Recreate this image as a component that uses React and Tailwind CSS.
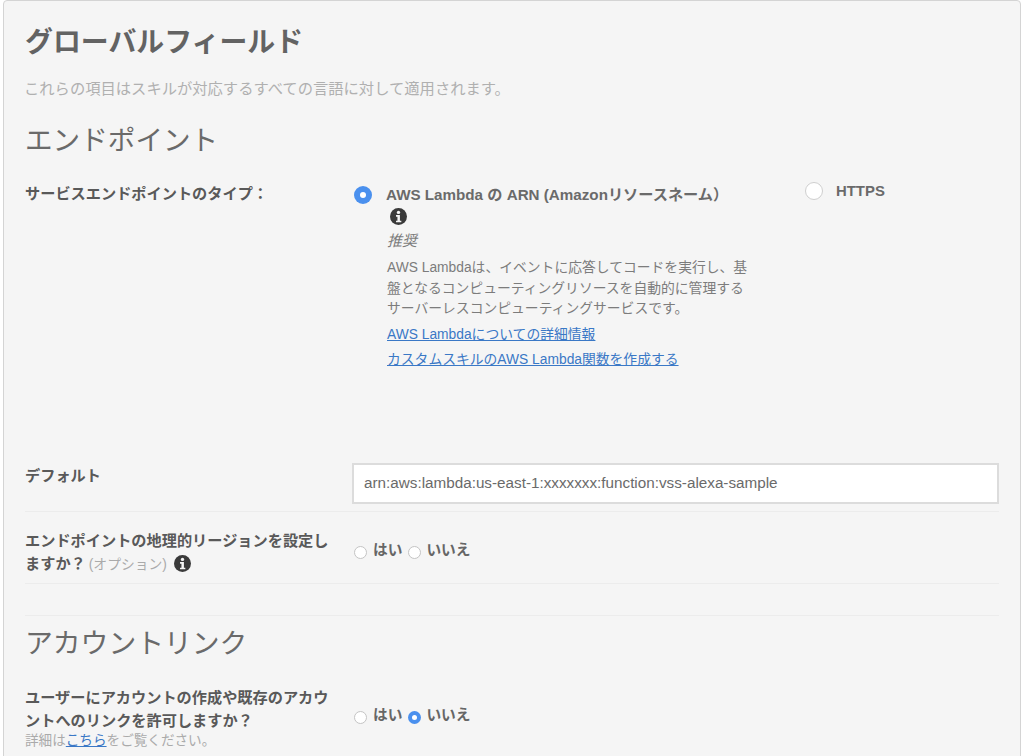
const FONT = "font-['Liberation_Sans','Noto_Sans_CJK_JP',sans-serif]"

function InfoIcon({ className }) {
  return (
    <svg className={className} viewBox="0 0 24 24">
      <circle cx="12" cy="12" r="12" fill="#3a3a3a" />
      <circle cx="12" cy="6.2" r="2.4" fill="#f5f5f5" />
      <path d="M8.5 10h5.5v8h2v2.2H8.5V18h2v-5.8h-2z" fill="#f5f5f5" />
    </svg>
  )
}

function BigRadio({ checked }) {
  if (checked) {
    return (
      <span className="flex h-[18px] w-[18px] shrink-0 items-center justify-center rounded-full bg-[#4a90ee]">
        <span className="h-[6px] w-[6px] rounded-full bg-white" />
      </span>
    )
  }
  return <span className="block h-[18px] w-[18px] shrink-0 rounded-full border border-[#cfcfcf] bg-white" />
}

function SmallRadio({ checked }) {
  if (checked) {
    return (
      <span className="mt-[6px] flex h-[13px] w-[13px] shrink-0 items-center justify-center rounded-full bg-[#4a90ee]">
        <span className="h-[5px] w-[5px] rounded-full bg-white" />
      </span>
    )
  }
  return <span className="mt-[6px] block h-[13px] w-[13px] shrink-0 rounded-full border border-[#c4c4c4] bg-white" />
}

function YesNo({ value }) {
  return (
    <div className="flex text-[14.7px] leading-[20px] font-bold text-[#666]">
      <SmallRadio checked={value === 'yes'} />
      <span className="ml-[6px]">はい</span>
      <span className="ml-[6px]"><SmallRadio checked={value === 'no'} /></span>
      <span className="ml-[5px]">いいえ</span>
    </div>
  )
}

export default function App() {
  return (
    <div className={`${FONT} h-[756px] w-[1024px] overflow-hidden bg-white pl-[3px]`}>
      <div className="h-[790px] w-[1018px] rounded-t border border-[#d4d4d4] bg-[#f5f5f5] pr-[21px] pl-[21px]">
        <h1 className="pt-[22px] text-[27.9px] leading-[40px] font-bold text-[#636363]">グローバルフィールド</h1>
        <p className="mt-[15px] -ml-[1px] text-[15.3px] leading-[22px] text-[#b0b0b0]">
          これらの項目はスキルが対応するすべての言語に対して適用されます。
        </p>
        <h2 className="mt-[21px] text-[27.6px] leading-[40px] text-[#6a6a6a]">エンドポイント</h2>

        {/* Endpoint type */}
        <div className="mt-[23px] flex h-[279px]">
          <div className="w-[329px] text-[15.2px] leading-[20px] font-bold text-[#595959]">サービスエンドポイントのタイプ：</div>
          <div className="flex w-[451px]">
            <div className="pt-[2px]"><BigRadio checked /></div>
            <div className="ml-[15px] w-[367px]">
              <div className="-ml-[1px] text-[15.2px] leading-[22px] font-bold text-[#6a6a6a]">AWS Lambda の ARN (Amazonリソースネーム）</div>
              <InfoIcon className="mt-[2px] ml-[3px] h-[17px] w-[17px]" />
              <div className="mt-[4px] text-[15px] leading-[24px] text-[#7c7c7c] italic">推奨</div>
              <p className="mt-[5px] w-[362px] text-[13.8px] leading-[20.5px] text-[#7c7c7c]">
                AWS Lambdaは、イベントに応答してコードを実行し、基盤となるコンピューティングリソースを自動的に管理するサーバーレスコンピューティングサービスです。
              </p>
              <a className="mt-[5px] block text-[13.8px] leading-[20px] text-[#3a78c6] underline" href="#">AWS Lambdaについての詳細情報</a>
              <a className="mt-[5px] block text-[13.8px] leading-[20px] text-[#3a78c6] underline" href="#">カスタムスキルのAWS Lambda関数を作成する</a>
            </div>
          </div>
          <div className="flex">
            <div className="-mt-[2px]"><BigRadio /></div>
            <span className="-mt-[4px] ml-[13px] text-[14.9px] leading-[22px] font-bold text-[#6a6a6a]">HTTPS</span>
          </div>
        </div>

        {/* Default */}
        <div className="flex h-[49px] border-b border-[#ececec]">
          <div className="w-[327px] pt-[3px] text-[15.2px] leading-[20px] font-bold text-[#595959]">デフォルト</div>
          <div className="flex h-[41px] flex-1 items-center border-2 border-[#dcdcdc] bg-white pl-[10px] text-[15.25px] text-[#6a6a6a]">
            arn:aws:lambda:us-east-1:xxxxxxx:function:vss-alexa-sample
          </div>
        </div>

        {/* Region */}
        <div className="flex h-[72px] border-b border-[#ececec] pt-[17px]">
          <div className="w-[327px] pr-[10px] text-[15.2px] leading-[23px] font-bold text-[#595959]">
            エンドポイントの地理的リージョンを設定しますか？
            <span className="ml-[3px] text-[13.8px] font-normal text-[#aaa]">(オプション)</span>
            <InfoIcon className="ml-[7px] inline-block h-[17px] w-[17px] align-[-3px]" />
          </div>
          <div className="pt-[11px] pl-[2px]"><YesNo /></div>
        </div>

        <div className="mt-[31px] border-t border-[#ececec]" />
        <h2 className="mt-[8px] text-[27.8px] leading-[40px] text-[#6a6a6a]">アカウントリンク</h2>

        {/* Account linking */}
        <div className="mt-[22px] flex">
          <div className="w-[327px] pr-[10px]">
            <div className="text-[15.2px] leading-[23px] font-bold text-[#595959]">
              ユーザーにアカウントの作成や既存のアカウントへのリンクを許可しますか？
            </div>
            <div className="text-[13.6px] leading-[18px] text-[#aaa]">
              詳細は<a className="text-[#3a78c6] underline" href="#">こちら</a>をご覧ください。
            </div>
          </div>
          <div className="pt-[19px] pl-[2px]"><YesNo value="no" /></div>
        </div>
      </div>
    </div>
  )
}
